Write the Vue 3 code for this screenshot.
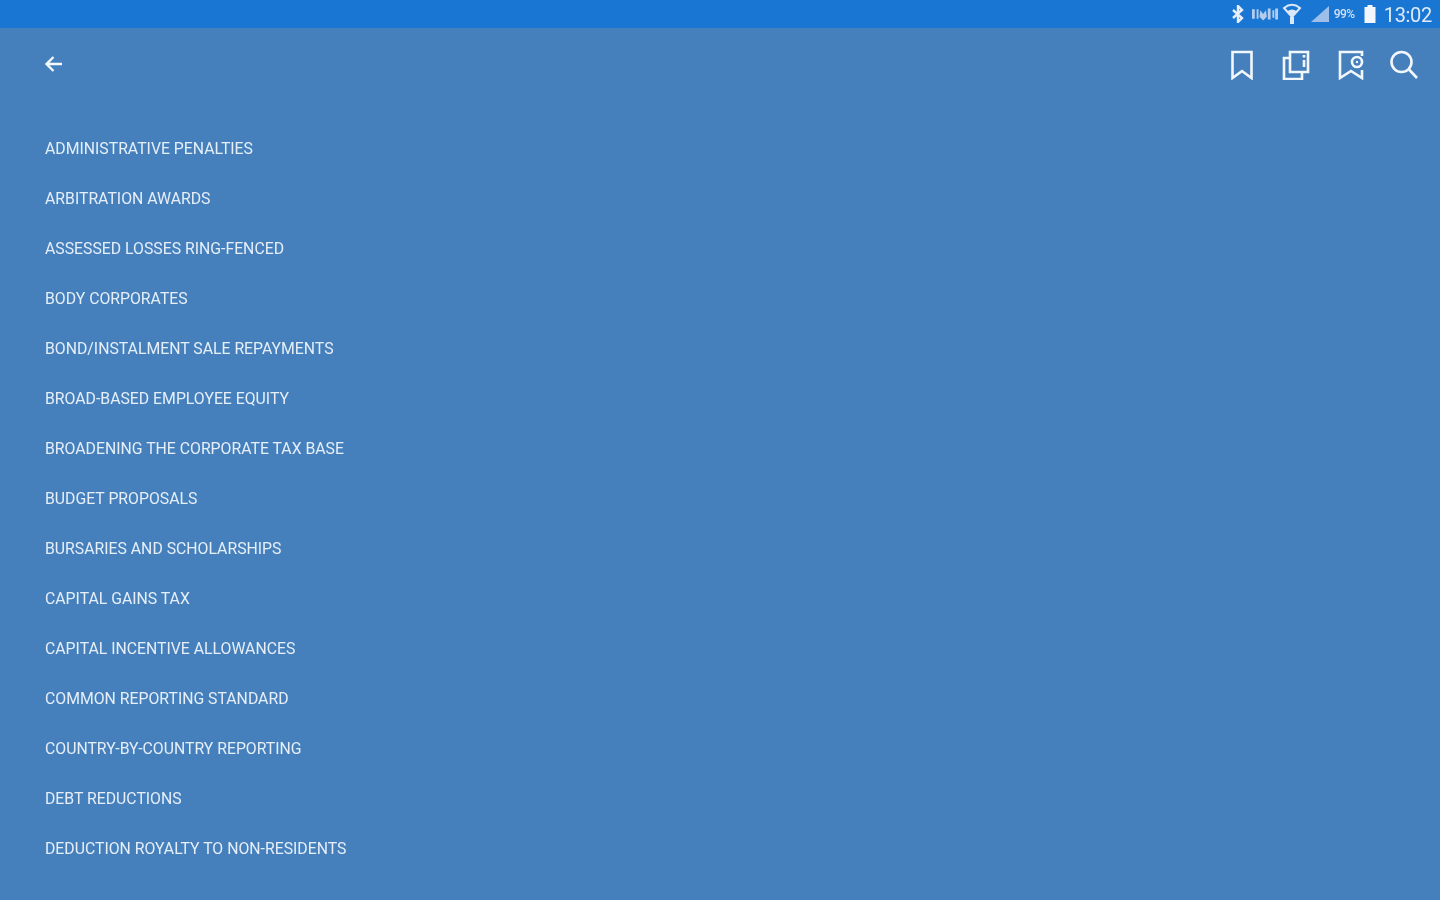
<script setup>
const topics = [
  'ADMINISTRATIVE PENALTIES',
  'ARBITRATION AWARDS',
  'ASSESSED LOSSES RING-FENCED',
  'BODY CORPORATES',
  'BOND/INSTALMENT SALE REPAYMENTS',
  'BROAD-BASED EMPLOYEE EQUITY',
  'BROADENING THE CORPORATE TAX BASE',
  'BUDGET PROPOSALS',
  'BURSARIES AND SCHOLARSHIPS',
  'CAPITAL GAINS TAX',
  'CAPITAL INCENTIVE ALLOWANCES',
  'COMMON REPORTING STANDARD',
  'COUNTRY-BY-COUNTRY REPORTING',
  'DEBT REDUCTIONS',
  'DEDUCTION ROYALTY TO NON-RESIDENTS'
]
</script>

<template>
  <div class="screen">
    <header class="status">
      <svg class="s-bt" width="12" height="18" viewBox="0 0 12 18" fill="none" stroke="#e6effb" stroke-width="2.400"><path d="M1 5l9 8-4 4V1l4 4-9 8" /></svg>
      <svg class="s-vol" width="26" height="16" viewBox="0 0 28 16" fill="#b4cdee"><path d="M0 3h3v10H0zM5 3h2v10H5z" /><path d="M9 4l3 4 3-4 1 7-4 4-4-4zM17 2h3v12h-3zM22 4h2v8h-2zM25 2h3v12h-3z" /></svg>
      <svg class="s-wifi" width="20" height="22" viewBox="0 0 20 22"><path d="M2 5c5-4 11-4 16 0l-8 9z" fill="none" stroke="#dbe8f8" stroke-width="2" /><path d="M5.500 8c3-2 6-2 9 0l-4.500 6z" fill="#dbe8f8" /><path d="M8 14h4v7H8z" fill="#dbe8f8" /></svg>
      <svg class="s-sig" width="20" height="18" viewBox="0 0 20 18"><path d="M19 1v16H1z" fill="#9dbfe9" /></svg>
      <span class="pct">99%</span>
      <svg class="s-bat" width="14" height="20" viewBox="0 0 14 20"><path d="M4.500 1h5v2h3v16h-11V3h3z" fill="#f2f7fd" /></svg>
      <span class="time">13:02</span>
    </header>

    <div class="toolbar">
      <button class="icon" aria-label="Back">
        <svg width="22" height="22" viewBox="0 0 22 22" fill="none" stroke="#f5f9fd" stroke-width="2.400"><path d="M19 11H3.500M10.500 4l-7 7 7 7" /></svg>
      </button>
      <div class="actions">
        <svg width="30" height="32" viewBox="0 0 30 32" fill="none" stroke="#f2f7fc" stroke-width="2.600"><path d="M5.500 4h19v26l-9.500-7-9.500 7z" /></svg>
        <svg width="30" height="32" viewBox="0 0 30 32" fill="none" stroke="#f2f7fc" stroke-width="2.600"><path d="M9 4h18v20H9z" /><path d="M9 10H3v21h18v-7" /><path d="M23 7v2.500M23 12v7" /></svg>
        <svg width="30" height="32" viewBox="0 0 30 32" fill="none" stroke="#f2f7fc" stroke-width="2.600"><path d="M27 8V4H5v26l11-7 11 7v-8" /><circle cx="22" cy="14" r="5" /><circle cx="22" cy="14" r="1.200" fill="#f2f7fc" stroke="none" /></svg>
        <svg width="30" height="32" viewBox="0 0 30 32" fill="none" stroke="#f2f7fc" stroke-width="2.600"><circle cx="12.500" cy="14" r="10" /><path d="M20 21.500l8 8.500" /></svg>
      </div>
    </div>

    <ul class="list">
      <li v-for="topic in topics" :key="topic" class="row">{{ topic }}</li>
    </ul>
  </div>
</template>

<style>
html, body { margin: 0; background: #4580bd; }
</style>

<style scoped>
.screen {
  width: 1440px;
  height: 900px;
  overflow: hidden;
  background: #4580bd;
  font-family: Roboto, "Liberation Sans", sans-serif;
}
.status {
  height: 28px;
  background: #1976d2;
  display: flex;
  align-items: center;
  justify-content: flex-end;
  padding-right: 8px;
  box-sizing: border-box;
  filter: blur(0.6px);
}
.s-bt { margin-right: 8px; }
.s-vol { margin-right: 4px; }
.s-wifi { margin-right: 8px; }
.s-sig { margin-right: 4px; }
.pct {
  width: 27px;
  font-size: 12px;
  font-weight: 500;
  color: #cfe0f5;
  letter-spacing: -0.5px;
  margin-right: 2px;
}
.s-bat { margin-right: 7px; }
.time {
  font-size: 20px;
  color: #dfeafa;
  letter-spacing: -0.3px;
  padding-top: 2px;
}
.toolbar {
  height: 72px;
  display: flex;
  align-items: center;
  justify-content: space-between;
  padding: 0 21px 0 43px;
  filter: blur(0.6px);
}
.icon { background: none; border: 0; padding: 0; display: flex; }
.actions { display: flex; gap: 24px; }
.list {
  list-style: none;
  margin: 24px 0 0;
  padding: 0 0 0 45px;
}
.row {
  height: 50px;
  line-height: 50px;
  font-size: 15.8px;
  color: #e6eef8;
  white-space: nowrap;
  filter: blur(0.6px);
}
</style>
